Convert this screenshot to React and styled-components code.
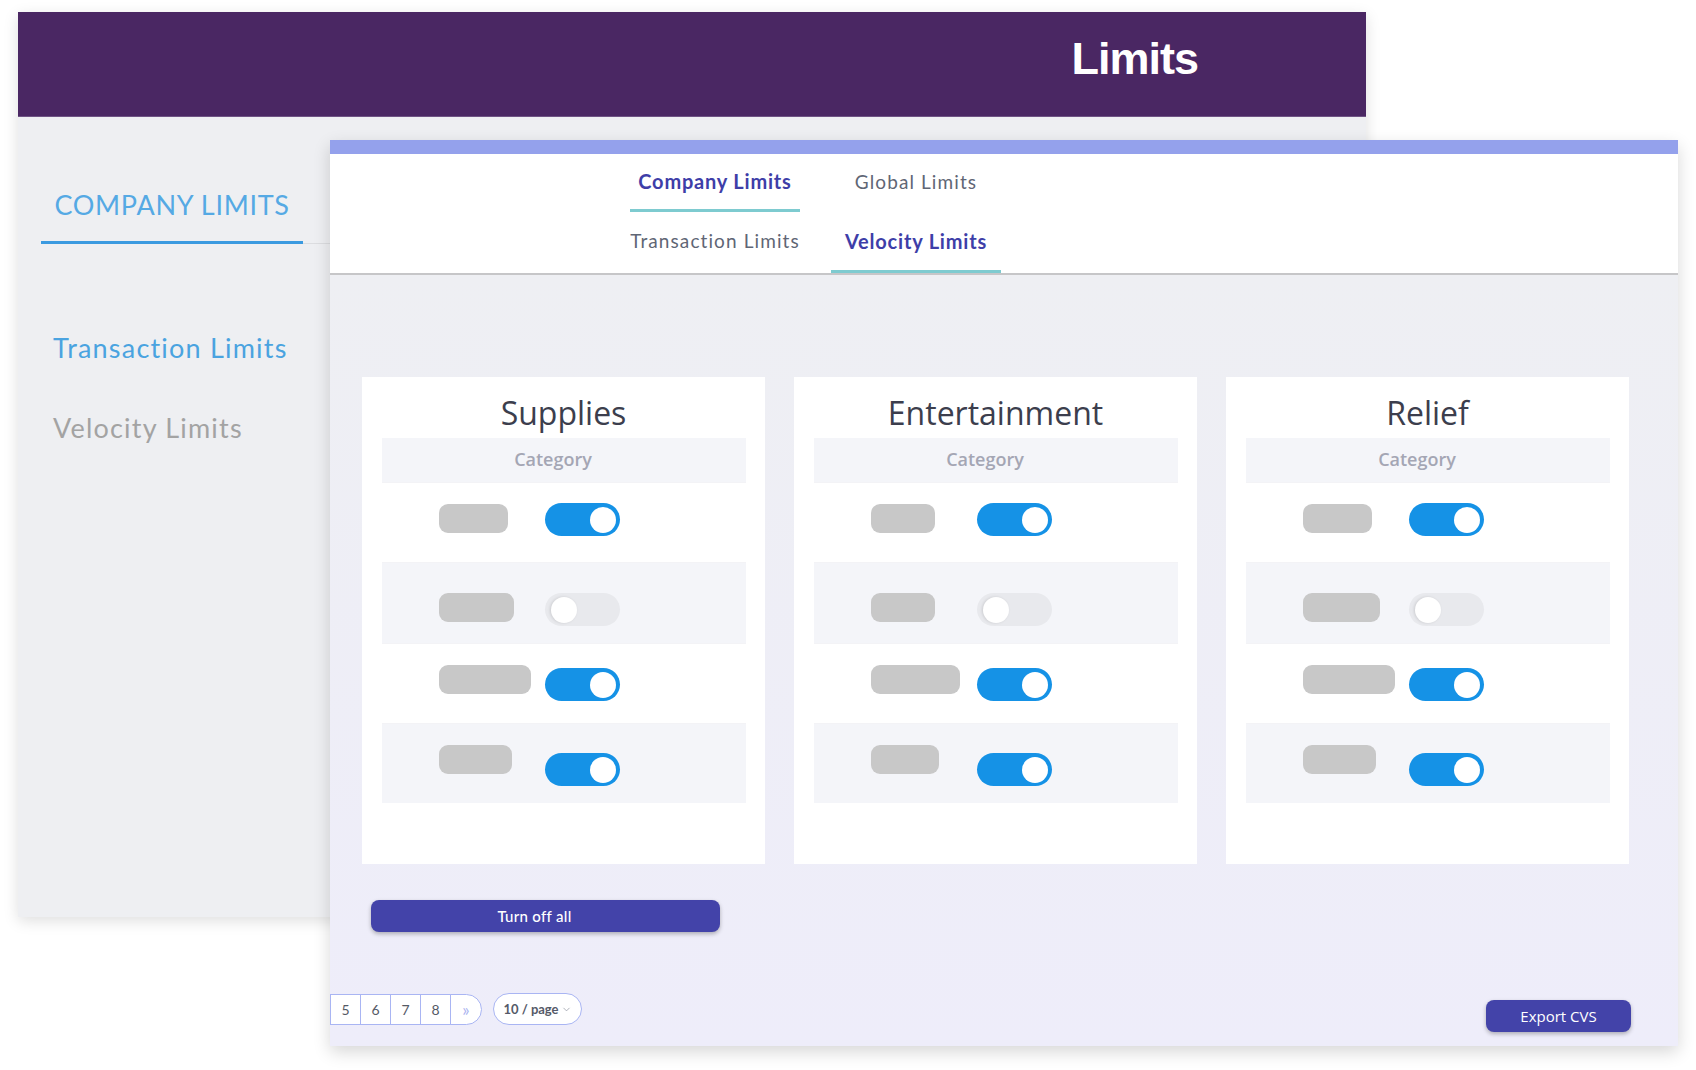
import React from 'react';
import styled, { createGlobalStyle } from 'styled-components';
import { ChevronDown } from 'lucide-react';

const GlobalStyle = createGlobalStyle`
    body {
        margin: 0;
        background: #ffffff;
        font-family: Lato, 'Open Sans', sans-serif;
    }
`

const Desktop = styled.div`
    position: relative;
    width: 1696px;
    height: 1070px;
    overflow: hidden;
    padding-top: 12px;
    box-sizing: border-box;
`

const BackWindow = styled.div`
    margin-left: 18px;
    width: 1348px;
    height: 905px;
    display: flex;
    flex-direction: column;
    background: #eeeff2;
    box-shadow: 0 4px 14px rgba(0, 0, 0, 0.13);
`

const Header = styled.header`
    height: 105px;
    flex-shrink: 0;
    box-sizing: border-box;
    display: flex;
    align-items: center;
    justify-content: flex-end;
    padding: 0 168px 10px 0;
    background: #4a2763;
    border-bottom: 1px solid #6e5384;
    h1 {
        margin: 0;
        color: #ffffff;
        font-family: 'Liberation Sans', Arial, sans-serif;
        font-weight: 700;
        font-size: 45px;
        letter-spacing: -1px;
    }
`

const Sidebar = styled.nav`
    padding-top: 70px;
    width: 312px;
`

const SideTabBar = styled.div`
    margin-left: 23px;
    border-bottom: 1px solid #dcdde0;
`

const SideTab = styled.div`
    width: 262px;
    text-align: center;
    font-size: 27px;
    line-height: 36px;
    letter-spacing: 0.7px;
    color: #55a9e4;
    padding-bottom: 18px;
    border-bottom: 3px solid #3b9ae0;
    margin-bottom: -1px;
`

const SideList = styled.ul`
    list-style: none;
    margin: 86px 0 0 35px;
    padding: 0;
    display: flex;
    flex-direction: column;
    gap: 44px;
`

const SideItem = styled.li`
    font-size: 27px;
    line-height: 36px;
    letter-spacing: 1.2px;
    color: ${p => p.$active ? '#4aa3e0' : '#a3a3a3'};
`

const FrontWindow = styled.section`
    position: absolute;
    left: 330px;
    top: 140px;
    width: 1348px;
    height: 906px;
    display: flex;
    flex-direction: column;
    background: #ffffff;
    border-top: 14px solid #94a1ec;
    box-sizing: border-box;
    box-shadow: 0 6px 16px rgba(0, 0, 0, 0.16);
`

const TabsArea = styled.div`
    height: 121px;
    box-sizing: border-box;
    padding-left: 300px;
    border-bottom: 2px solid #c6c6c8;
    display: flex;
    flex-direction: column;
`

const TabRow = styled.div`
    display: grid;
    grid-template-columns: 170px 170px;
    gap: 31px;
    height: ${p => p.$h}px;
`

const Tab = styled.div`
    display: flex;
    align-items: center;
    justify-content: center;
    white-space: nowrap;
    font-size: ${p => p.$active ? 20 : 19}px;
    font-weight: ${p => p.$active ? 700 : 400};
    letter-spacing: ${p => p.$active ? 0.8 : 1.1}px;
    color: ${p => p.$active ? '#3e3ea8' : '#5f6675'};
    border-bottom: ${p => p.$active ? '3px solid #7ecbd0' : '3px solid transparent'};
    padding-bottom: 1px;
    box-sizing: border-box;
`

const Content = styled.div`
    flex: 1;
    display: flex;
    flex-direction: column;
    background: linear-gradient(#eeeff3, #eeedfa);
`

const CardGrid = styled.div`
    margin: 102px 50px 0 32px;
    display: grid;
    grid-template-columns: repeat(3, 403px);
    gap: 29px;
`

const Card = styled.div`
    background: #ffffff;
    height: 487px;
    box-sizing: border-box;
    padding-top: 14px;
    display: flex;
    flex-direction: column;
`

const CardTitle = styled.h2`
    margin: 0 0 3px;
    text-align: center;
    font-family: 'Open Sans', sans-serif;
    font-weight: 400;
    font-size: 32px;
    line-height: 44px;
    color: #3c3e4d;
`

const Band = styled.div`
    margin: 0 19px 0 20px;
    height: 44px;
    flex-shrink: 0;
    box-sizing: border-box;
    padding: 0 22px 3px 0;
    display: flex;
    align-items: center;
    justify-content: center;
    background: #f4f5f9;
    font-family: 'Open Sans', sans-serif;
    font-weight: 600;
    font-size: 18px;
    color: #a4a6b4;
`

const Row = styled.div`
    height: ${p => p.$h}px;
    flex-shrink: 0;
    margin: 0 19px 0 20px;
    padding-left: 57px;
    display: flex;
    align-items: flex-start;
    background: ${p => p.$striped ? '#f4f5f9' : '#ffffff'};
    border-top: 1px solid #f3f3f6;
    box-sizing: border-box;
`

const PillSlot = styled.div`
    width: 106px;
    flex-shrink: 0;
`

const Pill = styled.div`
    height: 29px;
    border-radius: 9px;
    background: #c8c8c8;
`

const Toggle = styled.span`
    width: 75px;
    height: 33px;
    border-radius: 17px;
    box-sizing: border-box;
    display: flex;
    align-items: center;
    justify-content: ${p => p.$on ? 'flex-end' : 'flex-start'};
    padding: ${p => p.$on ? '0 4px 0 0' : '0 0 0 6px'};
    background: ${p => p.$on ? '#1592e6' : '#e8e9ed'};
    &::after {
        content: '';
        width: 26px;
        height: 26px;
        border-radius: 50%;
        background: #ffffff;
        box-shadow: ${p => p.$on ? 'none' : '-1px 0 3px rgba(0,0,0,0.12)'};
    }
`

const PrimaryButton = styled.button`
    border: none;
    border-radius: 8px;
    background: #4343a9;
    color: #ffffff;
    height: 32px;
    font-size: 15px;
    cursor: pointer;
    box-shadow: 0 2px 4px rgba(0, 0, 0, 0.28);
`

const TurnOffButton = styled(PrimaryButton)`
    margin: 36px 0 0 41px;
    width: 349px;
    padding: 0 22px 0 0;
    font-family: Lato, sans-serif;
    font-weight: 500;
    letter-spacing: 0.3px;
`

const ExportButton = styled(PrimaryButton)`
    margin-top: 7px;
    width: 145px;
    font-family: 'Open Sans', sans-serif;
`

const Footer = styled.div`
    margin-top: 61px;
    padding: 0 47px 14px 0;
    display: flex;
    justify-content: space-between;
    align-items: flex-start;
`

const Pager = styled.div`
    display: flex;
    align-items: center;
    gap: 11px;
`

const PageList = styled.div`
    display: flex;
`

const PageBox = styled.span`
    width: ${p => p.$last ? 32 : 31}px;
    height: 31px;
    box-sizing: border-box;
    display: flex;
    align-items: center;
    justify-content: center;
    background: #ffffff;
    border: 1px solid #a9b5f3;
    margin-left: -1px;
    font-size: ${p => p.$muted ? 17 : 14}px;
    color: ${p => p.$muted ? '#aab4f0' : '#555a66'};
    border-radius: ${p => p.$last ? '0 16px 16px 0' : '0'};
    &:first-child { margin-left: 0; }
`

const PageSize = styled.span`
    width: 89px;
    height: 32px;
    box-sizing: border-box;
    display: flex;
    align-items: center;
    justify-content: center;
    gap: 2px;
    background: #ffffff;
    border: 1px solid #a9b5f3;
    border-radius: 16px;
    font-size: 13px;
    font-weight: 700;
    color: #555a68;
`

const limits = [
    { title: 'Supplies', pills: [69, 75, 92, 73] },
    { title: 'Entertainment', pills: [64, 64, 89, 68] },
    { title: 'Relief', pills: [69, 77, 92, 73] },
]

const rows = [
    { h: 80, pill: 21, toggle: 20, on: true },
    { h: 81, pill: 30, toggle: 30, on: false },
    { h: 80, pill: 21, toggle: 24, on: true },
    { h: 80, pill: 21, toggle: 29, on: true },
]

function LimitCard({ title, pills }) {
    return (
        <Card>
            <CardTitle>{title}</CardTitle>
            <Band>Category</Band>
            {rows.map((r, i) => (
                <Row key={i} $h={r.h} $striped={i % 2 === 1}>
                    <PillSlot>
                        <Pill style={{ width: pills[i], marginTop: r.pill }} />
                    </PillSlot>
                    <Toggle $on={r.on} style={{ marginTop: r.toggle }} />
                </Row>
            ))}
        </Card>
    )
}

function App() {
    return (
        <Desktop>
            <GlobalStyle />
            <BackWindow>
                <Header>
                    <h1>Limits</h1>
                </Header>
                <Sidebar>
                    <SideTabBar>
                        <SideTab>COMPANY LIMITS</SideTab>
                    </SideTabBar>
                    <SideList>
                        <SideItem $active>Transaction Limits</SideItem>
                        <SideItem>Velocity Limits</SideItem>
                    </SideList>
                </Sidebar>
            </BackWindow>

            <FrontWindow>
                <TabsArea>
                    <TabRow $h={58}>
                        <Tab $active>Company Limits</Tab>
                        <Tab>Global Limits</Tab>
                    </TabRow>
                    <TabRow $h={61}>
                        <Tab>Transaction Limits</Tab>
                        <Tab $active>Velocity Limits</Tab>
                    </TabRow>
                </TabsArea>
                <Content>
                    <CardGrid>
                        {limits.map(l => <LimitCard key={l.title} {...l} />)}
                    </CardGrid>
                    <div>
                        <TurnOffButton>Turn off all</TurnOffButton>
                    </div>
                    <Footer>
                        <Pager>
                            <PageList>
                                {['5', '6', '7', '8'].map(n => <PageBox key={n}>{n}</PageBox>)}
                                <PageBox $muted $last>»</PageBox>
                            </PageList>
                            <PageSize>
                                10 / page <ChevronDown size={11} strokeWidth={1.5} color="#8a8f9c" />
                            </PageSize>
                        </Pager>
                        <ExportButton>Export CVS</ExportButton>
                    </Footer>
                </Content>
            </FrontWindow>
        </Desktop>
    )
}

export default App
